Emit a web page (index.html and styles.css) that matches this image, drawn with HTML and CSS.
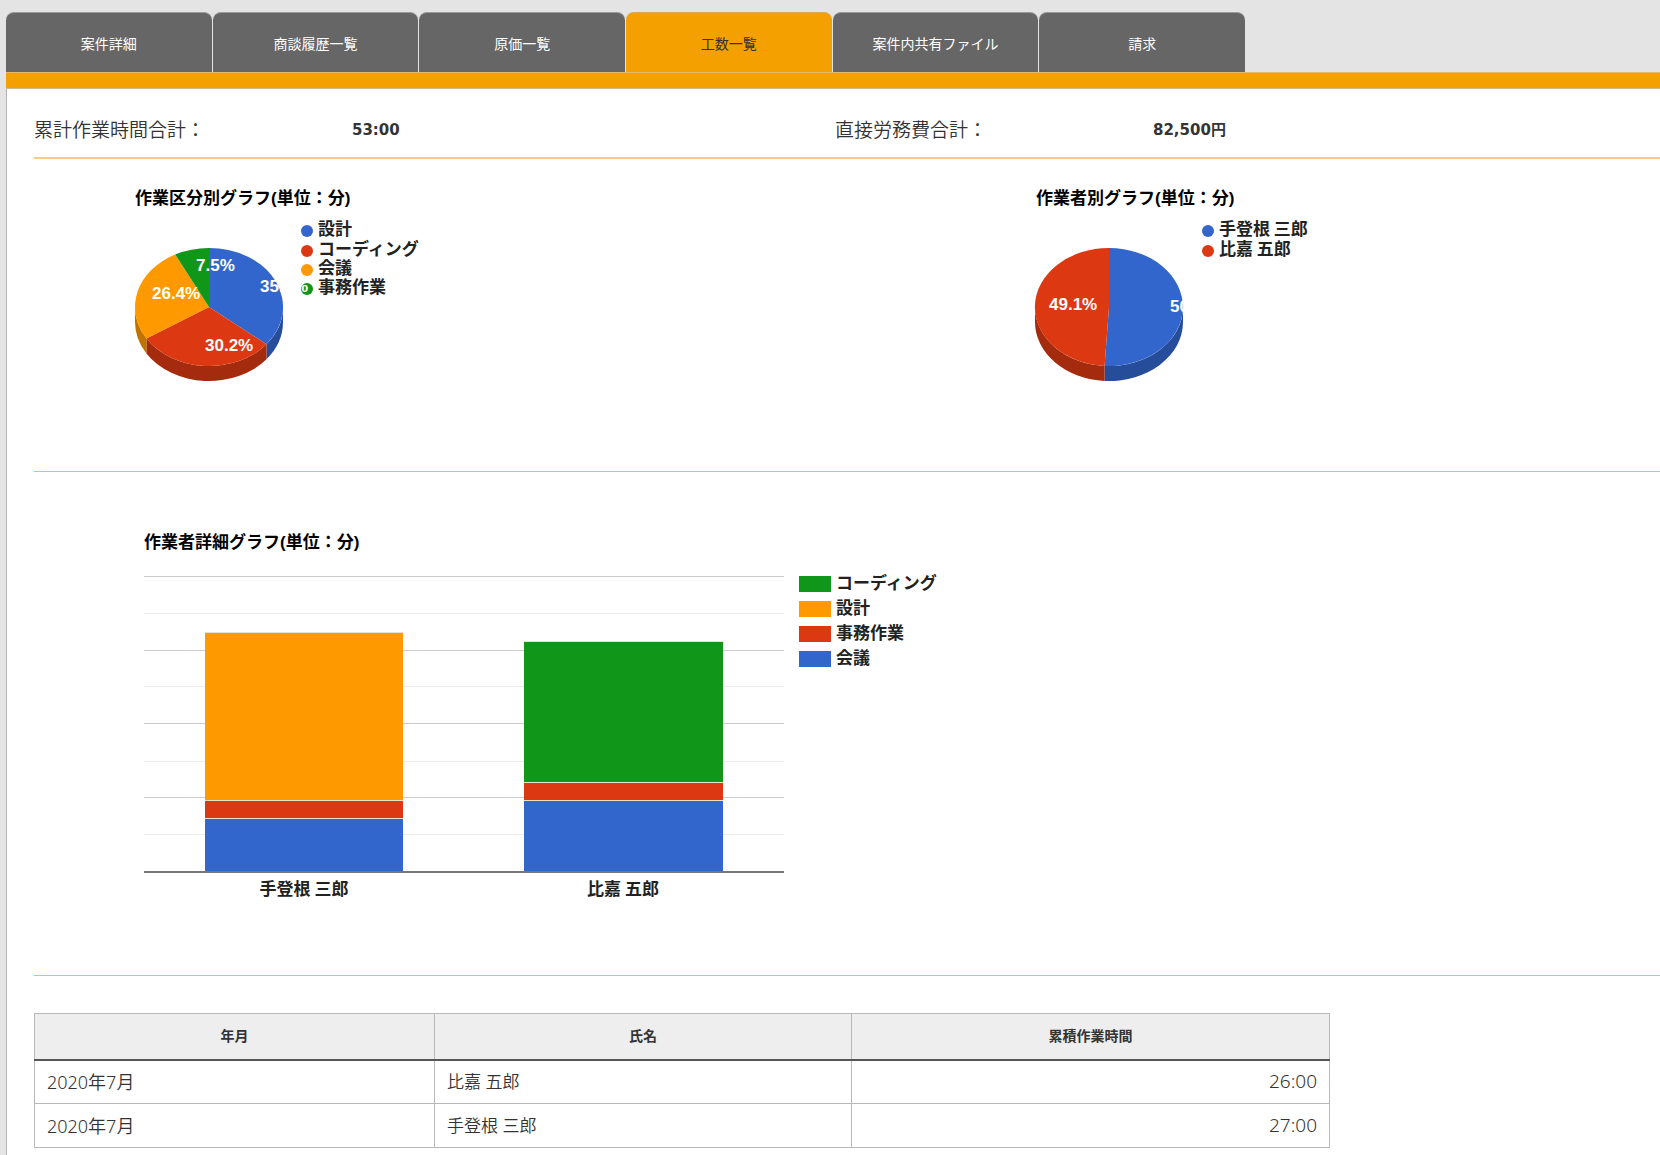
FILE: index.html
```html
<!DOCTYPE html>
<html lang="ja">
<head>
<meta charset="utf-8">
<meta name="viewport" content="width=device-width, initial-scale=1">
<title>工数一覧</title>
<link rel="stylesheet" href="styles.css">
</head>
<body>
<nav class="tabs">
  <a class="tab" href="#detail">案件詳細</a>
  <a class="tab" href="#history">商談履歴一覧</a>
  <a class="tab" href="#cost">原価一覧</a>
  <a class="tab tab-active" href="#hours" aria-current="page">工数一覧</a>
  <a class="tab" href="#files">案件内共有ファイル</a>
  <a class="tab" href="#billing">請求</a>
</nav>
<main class="panel">
  <dl class="summary">
    <div class="summary-item"><dt class="summary-label">累計作業時間合計：</dt><dd class="summary-value">53:00</dd></div>
    <div class="summary-item"><dt class="summary-label">直接労務費合計：</dt><dd class="summary-value">82,500円</dd></div>
  </dl>

  <section class="pies">
    <svg class="chart" width="440" height="312" viewBox="0 0 440 312" role="img" aria-label="作業区分別グラフ">
      <text class="chart-title" x="101" y="45">作業区分別グラフ(単位：分)</text>
      <circle class="blue" cx="273" cy="72" r="6"/><text class="legend" x="284" y="76">設計</text>
      <circle class="red" cx="273" cy="92" r="6"/><text class="legend" x="284" y="96">コーディング</text>
      <circle class="orange" cx="273" cy="111" r="6"/><text class="legend" x="284" y="115">会議</text>
      <circle class="green" cx="273" cy="130" r="6"/><text class="legend" x="284" y="134">事務作業</text>
      <path class="blue-side" d="M249 148A74 59 0 0 1 232.5 185.2V200.2A74 59 0 0 0 249 163Z"/>
      <path class="red-side" d="M232.5 185.2A74 59 0 0 1 112.4 179.5V194.5A74 59 0 0 0 232.5 200.2Z"/>
      <path class="orange-side" d="M112.4 179.5A74 59 0 0 1 101 148V163A74 59 0 0 0 112.4 194.5Z"/>
      <path class="blue" d="M175 148V89A74 59 0 0 1 232.5 185.2Z"/>
      <path class="red" d="M175 148L232.5 185.2A74 59 0 0 1 112.4 179.5Z"/>
      <path class="orange" d="M175 148L112.4 179.5A74 59 0 0 1 141.2 95.5Z"/>
      <path class="green" d="M175 148L141.2 95.5A74 59 0 0 1 175 89Z"/>
      <text class="percent" x="226" y="133">35.8%</text>
      <text class="percent" x="171" y="192">30.2%</text>
      <text class="percent" x="118" y="140">26.4%</text>
      <text class="percent" x="162" y="112">7.5%</text>
    </svg>
    <svg class="chart" width="440" height="312" viewBox="0 0 440 312" role="img" aria-label="作業者別グラフ">
      <text class="chart-title" x="102" y="45">作業者別グラフ(単位：分)</text>
      <circle class="blue" cx="274" cy="72" r="6"/><text class="legend" x="285" y="76">手登根 三郎</text>
      <circle class="red" cx="274" cy="92" r="6"/><text class="legend" x="285" y="96">比嘉 五郎</text>
      <path class="blue-side" d="M249 148A74 59 0 0 1 170.6 206.9V221.9A74 59 0 0 0 249 163Z"/>
      <path class="red-side" d="M170.6 206.9A74 59 0 0 1 101 148V163A74 59 0 0 0 170.6 221.9Z"/>
      <path class="blue" d="M175 148V89A74 59 0 1 1 170.6 206.9Z"/>
      <path class="red" d="M175 148L170.6 206.9A74 59 0 0 1 175 89Z"/>
      <text class="percent" x="236" y="153">50.9%</text>
      <text class="percent" x="115" y="151">49.1%</text>
    </svg>
  </section>

  <section class="bars">
    <svg class="chart" width="940" height="503" viewBox="0 0 940 503" role="img" aria-label="作業者詳細グラフ">
      <text class="chart-title" x="110" y="76">作業者詳細グラフ(単位：分)</text>
      <g class="grid-minor">
        <path d="M110 141h640v1h-640zM110 214h640v1h-640zM110 289h640v1h-640zM110 362h640v1h-640z"/>
      </g>
      <g class="grid-major">
        <path d="M110 104h640v1h-640zM110 178h640v1h-640zM110 251h640v1h-640zM110 325h640v1h-640z"/>
      </g>
      <rect class="gap" x="171" y="160" width="198" height="239"/>
      <rect class="orange" x="171" y="161" width="198" height="167"/>
      <rect class="red" x="171" y="329" width="198" height="17"/>
      <rect class="blue" x="171" y="347" width="198" height="52"/>
      <rect class="gap" x="490" y="169" width="199" height="230"/>
      <rect class="green" x="490" y="170" width="199" height="140"/>
      <rect class="red" x="490" y="311" width="199" height="17"/>
      <rect class="blue" x="490" y="329" width="199" height="70"/>
      <rect class="axis" x="110" y="399" width="640" height="2"/>
      <text class="legend" x="270" y="423" text-anchor="middle">手登根 三郎</text>
      <text class="legend" x="589" y="423" text-anchor="middle">比嘉 五郎</text>
      <rect class="green" x="765" y="104" width="32" height="16"/><text class="legend" x="802" y="117">コーディング</text>
      <rect class="orange" x="765" y="129" width="32" height="16"/><text class="legend" x="802" y="142">設計</text>
      <rect class="red" x="765" y="154" width="32" height="16"/><text class="legend" x="802" y="167">事務作業</text>
      <rect class="blue" x="765" y="179" width="32" height="16"/><text class="legend" x="802" y="192">会議</text>
    </svg>
  </section>

  <table class="hours">
    <thead>
      <tr><th class="col-month" scope="col">年月</th><th class="col-name" scope="col">氏名</th><th class="col-time" scope="col">累積作業時間</th></tr>
    </thead>
    <tbody>
      <tr><td class="month">2020年7月</td><td>比嘉 五郎</td><td class="time">26:00</td></tr>
      <tr><td class="month">2020年7月</td><td>手登根 三郎</td><td class="time">27:00</td></tr>
    </tbody>
  </table>
</main>
</body>
</html>
```
FILE: styles.css
```css
* { box-sizing: border-box; }

body {
  margin: 0;
  padding: 12px 0 0 6px;
  min-height: 100vh;
  display: flex;
  flex-direction: column;
  background: #e4e4e4;
  color: #333;
  font-family: "Noto Sans", "Noto Sans CJK JP", sans-serif;
}

.tabs {
  display: flex;
  gap: 1px;
  max-width: 1239px;
}

.tab {
  flex: 1;
  height: 60px;
  line-height: 62px;
  border-top: 1px solid #999;
  border-radius: 8px 8px 0 0;
  background: #666;
  color: #fff;
  font-size: 14px;
  text-align: center;
  text-decoration: none;
  overflow: hidden;
}

.tab-active {
  background: #f3a000;
  border-top-color: #d8a850;
  color: #333;
}

.panel {
  flex: 1;
  padding-left: 27px;
  border-left: 1px solid #b4b4b4;
  background: #fff;
}

.panel::before {
  content: "";
  display: block;
  height: 15px;
  margin-left: -28px;
  border-top: 1px solid #e6b95f;
  border-bottom: 1px solid #d0b88c;
  background: #f3a000;
}

.summary {
  display: grid;
  grid-template-columns: 801fr 825fr;
  margin: 0;
  padding: 26px 0 12px;
  border-bottom: 2px solid #f9cd80;
}

.summary-item {
  display: flex;
  line-height: 30px;
}

.summary-label {
  width: 318px;
  font-size: 19px;
  font-weight: 350;
}

.summary-value {
  margin: 0;
  font-family: "DejaVu Sans", "Noto Sans CJK JP", sans-serif;
  font-size: 15px;
  font-weight: 700;
}

.pies {
  display: grid;
  grid-template-columns: 900fr 726fr;
  border-bottom: 1px solid #f5bb47;
}

.bars { border-bottom: 1px solid #f5bb47; }

.chart { display: block; }

.chart-title {
  fill: #000;
  font: 700 17px "Liberation Sans", "Noto Sans CJK JP", sans-serif;
}

.legend {
  fill: #222;
  font: 700 17px "Noto Sans CJK JP", sans-serif;
}

.percent {
  fill: #fff;
  font: 700 17px "Liberation Sans", sans-serif;
}

.blue { fill: #3366cc; }
.red { fill: #dc3912; }
.orange { fill: #ff9900; }
.green { fill: #109618; }
.blue-side { fill: #264d99; }
.red-side { fill: #a52b0e; }
.orange-side { fill: #bf7300; }
.gap { fill: #e6e3c8; }
.grid-major { fill: #ccc; }
.grid-minor { fill: #ebebeb; }
.axis { fill: #777; }

.hours {
  width: 80%;
  max-width: 1296px;
  margin-top: 37px;
  border-collapse: collapse;
  table-layout: fixed;
  border: 1px solid #b8b8b8;
}

.col-month { width: 400px; }
.col-name { width: 417px; }

.hours th {
  height: 46px;
  padding: 0 12px 2px;
  border-right: 1px solid #b8b8b8;
  border-bottom: 2px solid #555;
  background: #eee;
  font-size: 14px;
  font-weight: 700;
}

.hours td {
  height: 44px;
  padding: 0 12px 2px;
  border: 1px solid #b8b8b8;
  font-size: 17px;
  font-weight: 350;
}

.hours .month { font-size: 18px; }

.hours .time { text-align: right; font-size: 19px; }
```
